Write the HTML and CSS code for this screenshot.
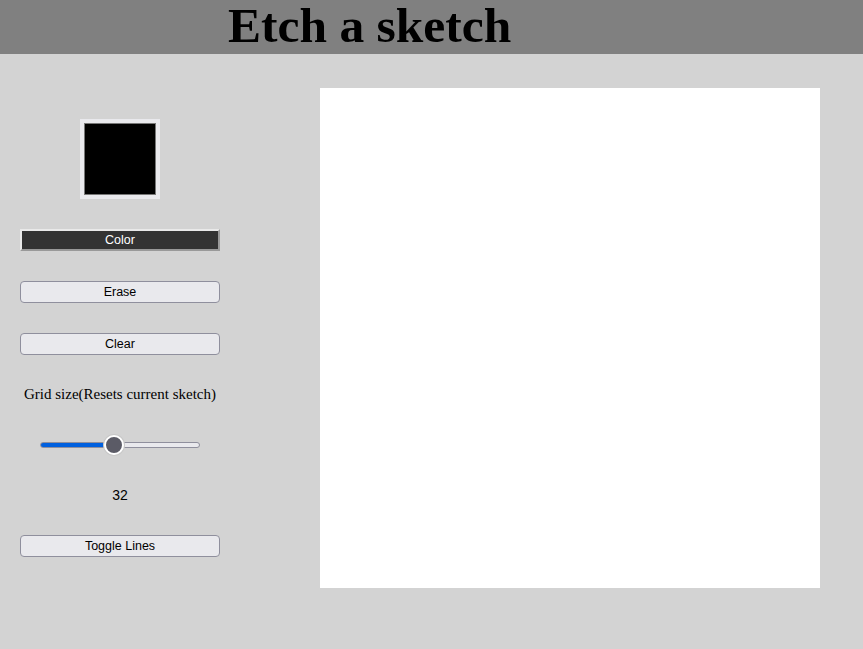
FILE: index.html
```html
<!DOCTYPE html>
<html lang="en">
<head>
<meta charset="utf-8">
<title>Etch a sketch</title>
<link rel="stylesheet" href="styles.css">
</head>
<body>
<header class="header">
  <h1 class="title">Etch a sketch</h1>
</header>
<main class="main">
  <aside class="sidebar">
    <div class="swatch"><div class="swatch-color"></div></div>
    <button class="btn btn-color">Color</button>
    <button class="btn">Erase</button>
    <button class="btn">Clear</button>
    <label class="grid-label" for="grid">Grid size(Resets current sketch)</label>
    <input class="slider" id="grid" type="range" min="0" max="70" value="32">
    <div class="grid-value">32</div>
    <button class="btn btn-toggle">Toggle Lines</button>
  </aside>
  <div class="canvas"></div>
</main>
</body>
</html>
```
FILE: styles.css
```css
html, body {
  margin: 0;
  padding: 0;
}
body {
  background: #d3d3d3;
  width: 863px;
  height: 649px;
  overflow: hidden;
}
.header {
  background: #808080;
  height: 54px;
  box-sizing: border-box;
  padding-left: 228px;
}
.title {
  margin: 0;
  font-family: "Liberation Serif", "Times New Roman", serif;
  font-weight: bold;
  font-size: 49.5px;
  line-height: 52px;
  color: #000;
}
.main {
  display: flex;
  align-items: flex-start;
  padding-top: 34px;
}
.sidebar {
  width: 240px;
  display: flex;
  flex-direction: column;
  align-items: center;
  padding-top: 31px;
}
.swatch {
  width: 80px;
  height: 80px;
  box-sizing: border-box;
  padding: 4px;
  background: #e9e9ed;
}
.swatch-color {
  width: 100%;
  height: 100%;
  box-sizing: border-box;
  border: 1px solid #777;
  background: #000;
}
.btn {
  width: 200px;
  height: 22px;
  box-sizing: border-box;
  margin: 30px 0 0;
  padding: 0;
  border: 1px solid #8f8f9d;
  border-radius: 4px;
  background: #e9e9ed;
  color: #000;
  font-family: "Liberation Sans", Arial, sans-serif;
  font-size: 12.5px;
  line-height: 21px;
}
.btn-color {
  background: #333;
  color: #fff;
  border: 2px solid;
  border-color: #e9e9e9 #999 #999 #e9e9e9;
  border-radius: 0;
  line-height: 19px;
}
.btn-toggle {
  margin-top: 32px;
}
.grid-label {
  margin-top: 30px;
  font-family: "Liberation Serif", "Times New Roman", serif;
  font-size: 15px;
  line-height: 18px;
  color: #000;
}
.slider {
  -webkit-appearance: none;
  appearance: none;
  margin: 39px 0 0;
  width: 160px;
  height: 6px;
  border-radius: 3px;
  border: 1px solid #8f8f9d;
  box-sizing: border-box;
  background: linear-gradient(to right, #0060df 0, #0060df 46%, #e9e9ed 46%, #e9e9ed 100%);
  outline: none;
}
.slider::-webkit-slider-thumb {
  -webkit-appearance: none;
  appearance: none;
  width: 20px;
  height: 20px;
  border-radius: 50%;
  background: #5b5b66;
  border: 2px solid #fff;
  box-sizing: border-box;
  box-shadow: 0 0 0 1px #c8c8c8;
}
.grid-value {
  margin-top: 39px;
  font-family: "Liberation Sans", Arial, sans-serif;
  font-size: 14px;
  line-height: 16px;
  color: #000;
}
.canvas {
  margin-left: 80px;
  width: 500px;
  height: 500px;
  background: #fff;
}
```
